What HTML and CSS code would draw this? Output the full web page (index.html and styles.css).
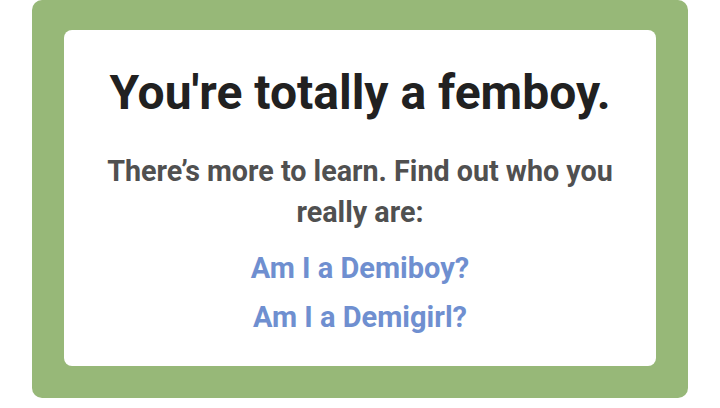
FILE: index.html
```html
<!DOCTYPE html>
<html>
<head>
<meta charset="utf-8">
<link rel="stylesheet" href="styles.css">
</head>
<body>
<div class="frame">
  <div class="card">
    <h1 class="title">You're totally a femboy.</h1>
    <p class="lead">There’s more to learn. Find out who you really are:</p>
    <ul class="links">
      <li><a href="#">Am I a Demiboy?</a></li>
      <li><a href="#">Am I a Demigirl?</a></li>
    </ul>
  </div>
</div>
</body>
</html>
```
FILE: styles.css
```css
html, body {
  margin: 0;
  padding: 0;
  background: #ffffff;
  font-family: Roboto, "Liberation Sans", sans-serif;
}
.frame {
  margin: 0 32px;
  height: 398px;
  box-sizing: border-box;
  padding: 30px 32px 32px;
  background: #97b878;
  border-radius: 10px;
}
.card {
  height: 100%;
  box-sizing: border-box;
  background: #ffffff;
  border-radius: 8px;
  text-align: center;
  padding: 34px 30px 0;
}
.title {
  margin: 0;
  font-size: 48px;
  font-weight: 700;
  line-height: 58px;
  color: #212121;
}
.lead {
  margin: 29px 0 0;
  font-size: 28.7px;
  font-weight: 700;
  line-height: 41px;
  color: #505050;
}
.links {
  list-style: none;
  margin: 11px 0 0;
  padding: 0;
}
.links li {
  font-size: 29px;
  font-weight: 700;
  line-height: 49px;
}
.links a {
  color: #6f8fd0;
  text-decoration: none;
}
```
